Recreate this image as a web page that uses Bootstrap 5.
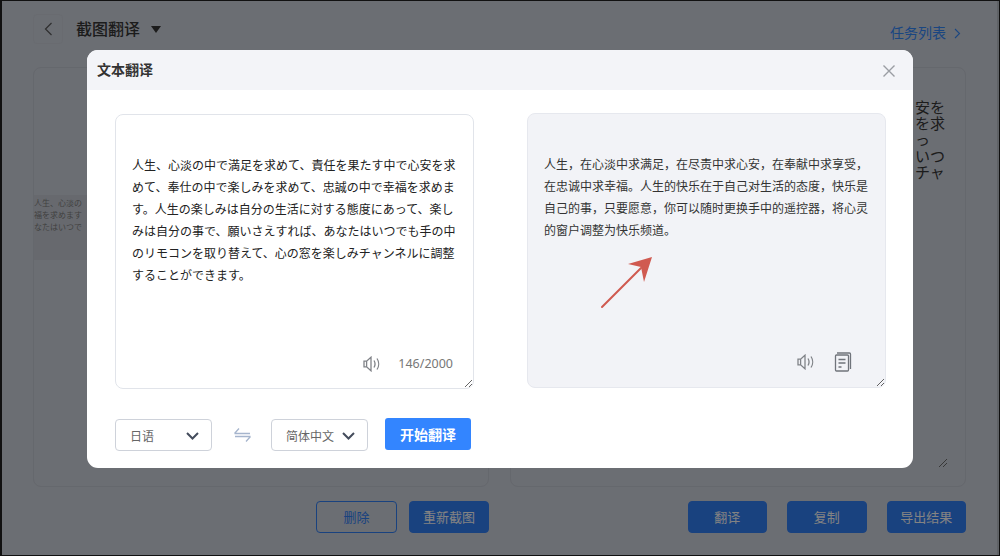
<!DOCTYPE html>
<html lang="zh">
<head>
<meta charset="utf-8">
<title>截图翻译</title>
<link rel="stylesheet" href="https://cdn.jsdelivr.net/npm/bootstrap@5.3.0/dist/css/bootstrap.min.css">
<style>
html,body{height:100%;margin:0}
body{overflow:hidden;background:#111;font-family:"Noto Sans","Noto Sans CJK SC",sans-serif}
.frame{position:relative;width:1000px;height:556px;border:solid #111;border-width:1px 1px 1px 2px;overflow:hidden}
.page{height:100%;background:#c3c8d1;padding:13px 31px 0 31px;border-right:2px solid #aeb2ba}
.back-box{width:30px;height:30px;border:1px solid #bfc4cd;border-radius:4px;color:#555}
.page-title{font-size:16px;font-weight:500;color:#333;margin-left:13px;line-height:30px}
.caret-down{width:0;height:0;border:solid transparent;border-width:7px 5.5px 0;border-top-color:#333;margin-left:11px}
.task-link{font-size:14px;line-height:20px;color:#3080ec;text-decoration:none;margin-top:9px;padding-right:5px}
.task-link svg{margin-left:8px}
.panes{margin-top:23px;height:420px;gap:21px}
.pane{flex:0 0 456px;border:1px solid #b8bdc7;border-radius:8px;position:relative}
.pane-left{padding-top:127px}
.shot{width:54px;height:65px;background:#bcc0c9;font:8px/12px "Noto Sans CJK JP",sans-serif;color:#777;padding-top:2px;overflow:hidden;white-space:nowrap}
.pane-right{padding:31px 19px 0 404px}
.big-text{font:15px/16.2px "Noto Sans CJK JP",sans-serif;color:#333;white-space:nowrap}
.pane-resize{position:absolute;right:18px;bottom:19px;width:8px;height:8px}
.bar{margin-top:14px}
.tool-btn{width:79.5px;height:32px;padding:0;font-size:13px;border-radius:4px;background:#2f78e8;border:1px solid #2f78e8;color:#eee;line-height:30px;text-align:center}
.tool-btn.ghost{background:transparent;color:#2f78e8;width:81px}
.tool-btn.wide{width:80px}
.bar-left{width:456px;gap:12px;justify-content:flex-end}
.bar-right{width:456px;margin-left:21px;gap:20px;justify-content:flex-end}
.dim{position:absolute;inset:0;background:rgba(0,0,0,.45)}
.dialog{position:absolute;left:85px;top:49px;width:826px;height:418px;background:#fff;border:0;border-radius:11px;overflow:hidden}
.dlg-head{height:40px;background:#f3f4f8;padding:0 17px 0 10px;border:0;border-radius:0}
.dlg-title{font-size:14px;font-weight:700;color:#333;line-height:1;margin:0}
.dlg-close{background:none;border:0;padding:0;width:14px;height:14px;display:flex;margin-top:1px}
.dlg-body{padding:23px 28px 0 28px}
.boxes{gap:53px}
.tbox{position:relative;width:359px;height:275px;flex:none}
.src{display:block;width:359px;height:275px;margin-top:1px;padding:39px 17px 0 16px;font:12px/22px "Noto Sans CJK JP",sans-serif;color:#222;border:1px solid #e1e4ea;border-radius:8px;resize:both;overflow:hidden;background:#fff;box-shadow:none}
.out{width:359px;height:275px;padding:39px 17px 0 16px;font:12px/22px "Noto Sans CJK SC",sans-serif;color:#333;border:1px solid #e6e8ee;border-radius:8px;background:#f2f3f7;resize:both;overflow:hidden}
.foot-tools{position:absolute;right:21px;bottom:15px;gap:17px;font-size:12.5px;color:#777;line-height:18px}
.foot-tools.out-tools{right:34px;bottom:16px;gap:19px}
.ctrl{margin-top:30px;align-items:flex-start}
.lang-select{height:32px;width:97px;margin-top:1px;padding:1px 12px 0 14px;border:1px solid #ced2da;border-radius:4px;font:12px/1 "Noto Sans CJK SC",sans-serif;color:#666;background:#fff;display:flex;align-items:center;justify-content:space-between}
.swap{margin:9px 20px 0 22px;flex:none}
.go-btn{width:86px;height:32px;margin-left:17px;padding:0;background:#3385ff;border:0;border-radius:3px;font-size:14px;font-weight:700;color:#fff}
.arrow-mark{position:absolute;left:513px;top:206px;width:56px;height:56px;overflow:visible;pointer-events:none}
</style>
</head>
<body>
<div class="frame">
  <div class="page">
    <div class="d-flex align-items-start">
      <span class="back-box d-flex align-items-center justify-content-center">
        <svg width="9" height="14" viewBox="0 0 9 14" fill="none" stroke="#555" stroke-width="1.2"><path d="M7.5 1 1.5 7l6 6"/></svg>
      </span>
      <span class="page-title">截图翻译</span>
      <span class="caret-down align-self-center"></span>
      <a class="task-link ms-auto d-flex align-items-center" href="#">任务列表
        <svg width="7" height="11" viewBox="0 0 7 11" fill="none" stroke="#3080ec" stroke-width="1.1"><path d="M1 1l4.500 4.500L1 10"/></svg>
      </a>
    </div>
    <div class="panes d-flex">
      <div class="pane pane-left">
        <div class="shot">人生、心淡の<br>福を求めます<br>なたはいつで</div>
      </div>
      <div class="pane pane-right">
        <div class="big-text">安を<br>を求<br>っ<br>いつ<br>チャ</div>
        <svg class="pane-resize" viewBox="0 0 8 8" fill="none" stroke="#666" stroke-width="1"><path d="M0 8 8 0M4 8l4-4"/></svg>
      </div>
    </div>
    <div class="bar d-flex">
      <div class="bar-left d-flex">
        <button class="tool-btn ghost" type="button">删除</button>
        <button class="tool-btn wide" type="button">重新截图</button>
      </div>
      <div class="bar-right d-flex">
        <button class="tool-btn" type="button">翻译</button>
        <button class="tool-btn" type="button">复制</button>
        <button class="tool-btn" type="button">导出结果</button>
      </div>
    </div>
  </div>
  <div class="dim"></div>
  <div class="dialog card">
    <div class="dlg-head card-header d-flex align-items-center justify-content-between">
      <h5 class="dlg-title">文本翻译</h5>
      <button class="dlg-close" type="button" aria-label="关闭">
        <svg width="14" height="14" viewBox="0 0 14 14" fill="none" stroke="#9a9da3" stroke-width="1.4"><path d="M1.500 1.500l11 11M12.500 1.500l-11 11"/></svg>
      </button>
    </div>
    <div class="dlg-body">
      <div class="boxes d-flex">
        <div class="tbox">
          <textarea class="src form-control" readonly>人生、心淡の中で満足を求めて、責任を果たす中で心安を求めて、奉仕の中で楽しみを求めて、忠誠の中で幸福を求めます。人生の楽しみは自分の生活に対する態度にあって、楽しみは自分の事で、願いさえすれば、あなたはいつでも手の中のリモコンを取り替えて、心の窓を楽しみチャンネルに調整することができます。</textarea>
          <div class="foot-tools d-flex align-items-center">
            <svg width="18" height="16" viewBox="0 0 18 16" fill="none" stroke="#808388" stroke-width="1.3"><path d="M1 5.200h2.600L8 1.200v13.600l-4.400-4H1zM3.600 5.200v5.600M11 4.500c1.200 2 1.200 5 0 7M14 2.500c2.200 3.200 2.200 7.800 0 11"/></svg>
            <span>146/2000</span>
          </div>
        </div>
        <div class="tbox">
          <div class="out">人生&#65292;在心淡中求满足&#65292;在尽责中求心安&#65292;在奉献中求享受&#65292;在忠诚中求幸福。人生的快乐在于自己对生活的态度&#65292;快乐是自己的事&#65292;只要愿意&#65292;你可以随时更换手中的遥控器&#65292;将心灵的窗户调整为快乐频道。</div>
          <div class="foot-tools out-tools d-flex align-items-center">
            <svg width="18" height="16" viewBox="0 0 18 16" fill="none" stroke="#808388" stroke-width="1.3"><path d="M1 5.200h2.600L8 1.200v13.600l-4.400-4H1zM3.600 5.200v5.600M11 4.500c1.200 2 1.200 5 0 7M14 2.500c2.200 3.200 2.200 7.800 0 11"/></svg>
            <svg width="18" height="20" viewBox="0 0 18 20" fill="none" stroke="#70747b" stroke-width="1.300"><path d="M3 1h12.500c.6 0 1 .4 1 1v15M1.500 4c0-.6.4-1 1-1h11c.6 0 1 .4 1 1v14c0 .6-.4 1-1 1h-11c-.6 0-1-.4-1-1z"/><path d="M4.500 7.500h7M4.500 11h7M4.500 15h3"/></svg>
          </div>
        </div>
      </div>
      <div class="ctrl d-flex">
        <div class="lang-select"><span>日语</span>
          <svg width="13" height="8" viewBox="0 0 13 8" fill="none" stroke="#444c5c" stroke-width="2"><path d="M1 1l5.500 5.500L12 1"/></svg>
        </div>
        <svg class="swap" width="17" height="16" viewBox="0 0 17 16" fill="none" stroke="#a6b5cd" stroke-width="1.300"><path d="M.5 6.500h15.500M.5 6.500 5 1.500M16.500 9.500H1M16.500 9.500 12 14.500"/></svg>
        <div class="lang-select"><span>简体中文</span>
          <svg width="13" height="8" viewBox="0 0 13 8" fill="none" stroke="#444c5c" stroke-width="2"><path d="M1 1l5.500 5.500L12 1"/></svg>
        </div>
        <button class="go-btn btn" type="button">开始翻译</button>
      </div>
    </div>
    <svg class="arrow-mark" viewBox="0 0 56 56"><path d="M2 51 41 12" stroke="#d05a50" stroke-width="2" fill="none" stroke-linecap="round"/><path d="M52 1 28 8 41 11 44 26z" fill="#d05a50"/></svg>
  </div>
</div>
<script src="https://cdn.jsdelivr.net/npm/bootstrap@5.3.0/dist/js/bootstrap.bundle.min.js"></script>
</body>
</html>
